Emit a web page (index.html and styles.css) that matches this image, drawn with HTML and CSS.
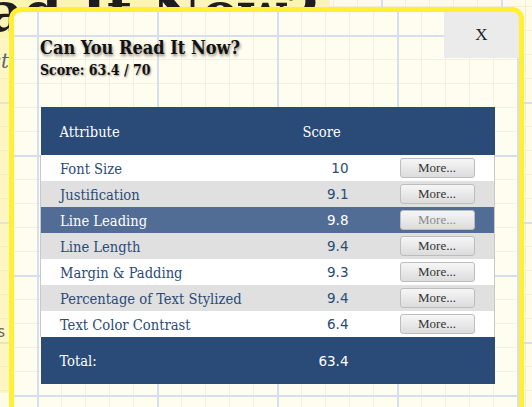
FILE: index.html
```html
<!DOCTYPE html>
<html>
<head>
<meta charset="utf-8">
<link rel="stylesheet" href="styles.css">
</head>
<body>
<div class="page">
  <div class="sidebar">
    <h1 class="hero"><span class="hero-text">Can You Read It Now?</span></h1>
    <p class="tagline"><span>A readability checklist</span></p>
    <p class="note"><span>Measure your lines</span></p>
  </div>
</div>

<div class="modal">
  <button class="close">X</button>
  <h2 class="title">Can You Read It Now?</h2>
  <p class="score">Score: 63.4 / 70</p>
  <table class="results">
    <colgroup>
      <col class="col-attr">
      <col class="col-score">
      <col class="col-more">
    </colgroup>
    <thead>
      <tr><th class="c-attr">Attribute</th><th class="c-score">Score</th><th class="c-more"></th></tr>
    </thead>
    <tbody>
      <tr><td class="c-attr">Font Size</td><td class="c-score">10</td><td class="c-more"><button class="more">More...</button></td></tr>
      <tr><td class="c-attr">Justification</td><td class="c-score">9.1</td><td class="c-more"><button class="more">More...</button></td></tr>
      <tr class="hover"><td class="c-attr">Line Leading</td><td class="c-score">9.8</td><td class="c-more"><button class="more">More...</button></td></tr>
      <tr><td class="c-attr">Line Length</td><td class="c-score">9.4</td><td class="c-more"><button class="more">More...</button></td></tr>
      <tr><td class="c-attr">Margin &amp; Padding</td><td class="c-score">9.3</td><td class="c-more"><button class="more">More...</button></td></tr>
      <tr><td class="c-attr">Percentage of Text Stylized</td><td class="c-score">9.4</td><td class="c-more"><button class="more">More...</button></td></tr>
      <tr><td class="c-attr">Text Color Contrast</td><td class="c-score">6.4</td><td class="c-more"><button class="more">More...</button></td></tr>
    </tbody>
    <tfoot>
      <tr><td class="c-attr">Total:</td><td class="c-score">63.4</td><td class="c-more"></td></tr>
    </tfoot>
  </table>
</div>
</body>
</html>
```
FILE: styles.css
```css
html, body {
  margin: 0;
  padding: 0;
  height: 100%;
  overflow: hidden;
}

body {
  background-color: #fffbe6;
  background-image:
    linear-gradient(90deg, #d6dff0 2px, transparent 2px),
    linear-gradient(#d6dff0 2px, transparent 2px),
    linear-gradient(90deg, #f2eed8 1px, transparent 1px),
    linear-gradient(#f2eed8 1px, transparent 1px);
  background-size: 120px 120px, 120px 120px, 24px 24px, 24px 24px;
  background-position: 21px 102px, 21px 102px, 21px 102px, 21px 102px;
  font-family: "DejaVu Serif", serif;
}

.page {
  height: 100%;
}

.sidebar {
  width: 330px;
  height: 100%;
  background: rgba(250, 238, 150, 0.45);
}

.hero {
  display: flex;
  justify-content: flex-end;
  width: 318px;
  margin: -14px 0 0 0;
  padding: 0;
  font-family: "DejaVu Serif", serif;
  font-weight: bold;
  font-size: 55px;
  line-height: 52px;
  white-space: nowrap;
  color: #1e1e1e;
}

.hero-text {
  flex: none;
  background: #fcf3b6;
  padding-right: 11px;
  margin-right: -11px;
}

.tagline,
.note {
  display: flex;
  justify-content: flex-end;
  white-space: nowrap;
}

.tagline span,
.note span {
  flex: none;
}

.tagline {
  width: 9px;
  margin: 11px 0 0 0;
  font-style: italic;
  font-size: 20px;
  line-height: 24px;
  color: #5a6670;
}

.note {
  width: 5px;
  margin: 250px 0 0 0;
  font-family: "DejaVu Sans", sans-serif;
  font-size: 15px;
  color: #666;
}

.modal {
  position: absolute;
  left: 9px;
  top: 7px;
  height: 420px;
  width: 454px;
  border: 5px solid #fff033;
  border-radius: 12px;
  padding: 0 25px 0 26px;
  box-sizing: content-box;
  background-color: #fffdf0;
  background-image:
    linear-gradient(90deg, #d6dff0 2px, transparent 2px),
    linear-gradient(#d6dff0 2px, transparent 2px),
    linear-gradient(90deg, #f3f0df 1px, transparent 1px),
    linear-gradient(#f3f0df 1px, transparent 1px);
  background-size: 120px 120px, 120px 120px, 24px 24px, 24px 24px;
  background-position: 23px 23px, 23px 23px, 23px 23px, 23px 23px;
  background-origin: padding-box;
}

.close {
  position: absolute;
  top: 0;
  right: 0;
  width: 75px;
  height: 46px;
  border: 0;
  border-top-right-radius: 7px;
  background: #ebebeb;
  font-family: "Liberation Serif", serif;
  font-size: 17px;
  color: #222;
  padding: 0;
}

.title {
  margin: 0;
  padding-top: 24px;
  font-family: "DejaVu Serif Condensed", "DejaVu Serif", serif;
  font-weight: bold;
  font-size: 18px;
  line-height: 24px;
  color: #111;
  text-shadow: 1px 2px 3px rgba(0, 0, 0, 0.45);
}

.score {
  margin: 0;
  font-family: "DejaVu Serif Condensed", "DejaVu Serif", serif;
  font-weight: bold;
  font-size: 14px;
  line-height: 20px;
  color: #111;
  text-shadow: 1px 1px 2px rgba(0, 0, 0, 0.4);
}

.results {
  margin-top: 27px;
  width: 454px;
  border-collapse: collapse;
  table-layout: fixed;
  font-family: "DejaVu Serif Condensed", "DejaVu Serif", serif;
  font-size: 14.6px;
}

.col-attr { width: 262px; }
.col-score { width: 66px; }
.col-more { width: 126px; }

.results th,
.results td {
  padding: 0;
}

.results .c-attr {
  padding-left: 19px;
  text-align: left;
}

.results thead tr,
.results tfoot tr {
  background: #2a4a77;
  color: #fff;
}

.results thead th {
  height: 48px;
  font-weight: normal;
  text-align: left;
}

.results tfoot td {
  height: 47px;
}

.results tbody tr {
  height: 26px;
  background: #fff;
  color: #2a4a77;
}

.results tbody tr:nth-child(even) {
  background: #e0e0e0;
}

.results tbody tr.hover {
  background: #526d95;
  color: #fff;
}

.results tbody td:first-child {
  border-left: 1px solid #c9c9c9;
}

.results tbody td:last-child {
  border-right: 1px solid #c9c9c9;
}

.results td.c-score {
  text-align: right;
  padding-right: 20px;
  font-family: "DejaVu Sans", sans-serif;
  font-size: 13.5px;
}

.results td.c-more {
  padding-left: 31px;
}

.more {
  display: block;
  width: 75px;
  height: 20px;
  padding: 0;
  border: 1px solid #bdbdbd;
  border-radius: 3px;
  background: linear-gradient(#f6f6f6, #dcdcdc);
  font-family: "Liberation Serif", serif;
  font-size: 13px;
  color: #333;
}

.hover .more {
  color: #8a8a8a;
}
```
